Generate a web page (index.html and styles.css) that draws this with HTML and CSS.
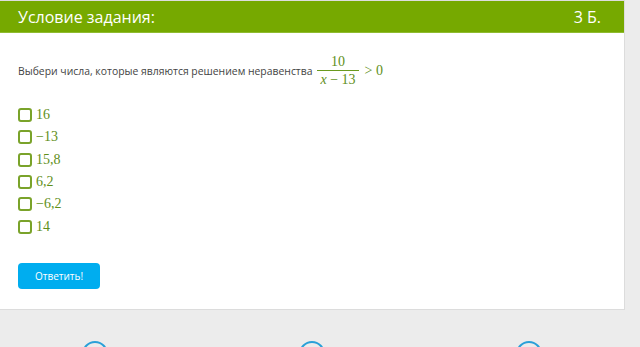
FILE: index.html
```html
<!DOCTYPE html>
<html lang="ru">
<head>
    <meta charset="UTF-8">
    <title>Условие задания</title>
    <link rel="stylesheet" href="styles.css">
</head>
<body>

    <!-- Task card -->
    <div class="card">
        <div class="card-header">
            <span>Условие задания:</span>
            <span>3 Б.</span>
        </div>

        <div class="card-body">
            <p class="question">
                Выбери числа, которые являются решением неравенства
                <span class="math">
                    <span class="frac">
                        <span class="num">10</span>
                        <span class="den"><i>x</i> − 13</span>
                    </span>
                    <span class="rel">&gt; 0</span>
                </span>
            </p>

            <ul class="options">
                <li><span class="box"></span><span class="math">16</span></li>
                <li><span class="box"></span><span class="math">−13</span></li>
                <li><span class="box"></span><span class="math">15,8</span></li>
                <li><span class="box"></span><span class="math">6,2</span></li>
                <li><span class="box"></span><span class="math">−6,2</span></li>
                <li><span class="box"></span><span class="math">14</span></li>
            </ul>

            <button class="answer-btn">Ответить!</button>
        </div>
    </div>

    <!-- Bottom navigation circles -->
    <div class="nav">
        <span class="circle"></span>
        <span class="circle"></span>
        <span class="circle"></span>
    </div>

</body>
</html>
```

FILE: styles.css
```css
/* General */
html, body {
    overflow: hidden;
}

body {
    margin: 0;
    background-color: #ececec;
    font-family: "Open Sans", Arial, sans-serif;
    height: 347px;
}

.card {
    width: 624px;
    height: 308px;
    background-color: white;
    border-top: 1px solid #ddd;
    border-bottom: 1px solid #dcdcdc;
    box-shadow: 1px 0 0 #dcdcdc;
}

.card-header {
    display: flex;
    justify-content: space-between;
    align-items: center;
    height: 31px;
    padding: 0 23px 0 18px;
    background-color: #76a900;
    border-bottom: 1px solid #8fbb30;
    color: white;
    font-size: 16px;
}

.card-body {
    padding: 21px 18px 0 18px;
}

.question {
    margin: 0;
    display: flex;
    align-items: center;
    gap: 5px;
    font-size: 10.4px;
    color: #444;
}

.math {
    font-family: "Liberation Serif", "DejaVu Serif", serif;
    color: #5f8f1a;
    font-size: 14px;
}

.question .math {
    display: inline-flex;
    align-items: center;
    gap: 6px;
}

.frac {
    display: inline-flex;
    flex-direction: column;
    align-items: center;
    font-size: 14px;
    line-height: 15px;
}

.frac .num {
    padding: 0 3px 1px;
}

.frac .den {
    border-top: 1px solid #6a9a1f;
    padding: 1px 3px 0;
}

.rel {
    font-size: 14px;
}

.options {
    list-style: none;
    margin: 17px 0 0 0;
    padding: 0;
}

.options li {
    display: flex;
    align-items: center;
    gap: 4px;
    height: 22.3px;
}

.box {
    width: 10px;
    height: 10px;
    border: 2px solid #7aa32a;
    border-radius: 3px;
}

.answer-btn {
    margin-top: 25px;
    width: 82px;
    height: 26px;
    background-color: #00adef;
    color: white;
    border: none;
    border-radius: 4px;
    font-family: "Open Sans", Arial, sans-serif;
    font-size: 10px;
    cursor: pointer;
}

.nav {
    display: flex;
    height: 8px;
    overflow: hidden;
    padding-left: 82px;
    gap: 191px;
    margin-top: 31px;
}

.circle {
    width: 22px;
    height: 22px;
    border: 2px solid #2aa0d8;
    border-radius: 50%;
    flex-shrink: 0;
}
```
